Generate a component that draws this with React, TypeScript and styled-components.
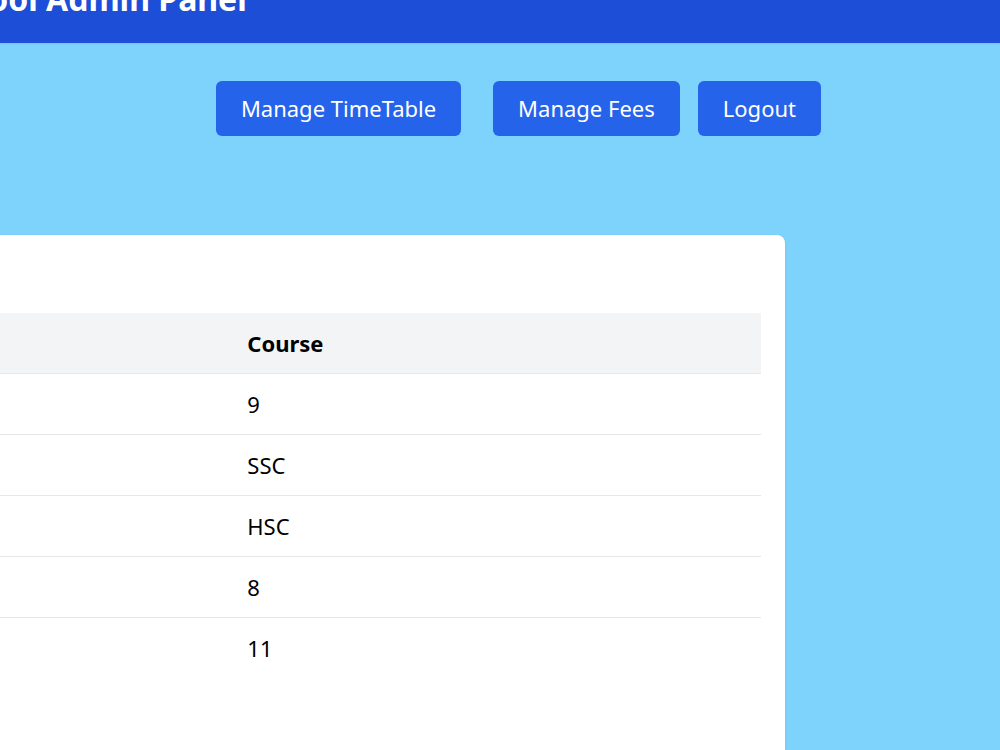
import { useLayoutEffect, useRef } from 'react'
import styled, { createGlobalStyle } from 'styled-components'

const GlobalStyle = createGlobalStyle`
  html, body {
    margin: 0;
    padding: 0;
    overflow: hidden;
  }
  body {
    font-family: 'Noto Sans', 'Open Sans', sans-serif;
    color: #111827;
  }
`

// the screenshot shows the page scrolled right and a bit down
const SCROLL_X = 900
const SCROLL_Y = 37

const Viewport = styled.div`
  width: 100vw;
  height: 100vh;
  overflow: hidden;
`

const Page = styled.div`
  width: 1900px;
  min-height: 1100px;
  background: #7dd3fc;
`

const Header = styled.header`
  display: flex;
  justify-content: center;
  background: #1d4ed8;
  padding: 16px 24px 24px;
  box-shadow: 0 1px 2px rgba(0, 0, 0, 0.08);
`

const Title = styled.h1`
  margin: 0 0 0 80px;
  font-size: 32px;
  line-height: 40px;
  font-weight: 700;
  color: #fff;
`

const Nav = styled.nav`
  display: flex;
  justify-content: flex-end;
  gap: 32px;
  margin-top: 38px;
  padding-right: 179px;
`

const NavGroup = styled.div`
  display: flex;
  gap: 18px;
`

const NavButton = styled.button`
  font-family: inherit;
  font-size: 22px;
  line-height: 31px;
  padding: 12px 25px;
  border: none;
  border-radius: 6px;
  background: #2563eb;
  color: #fff;
  cursor: pointer;
`

const Main = styled.main`
  padding: 99px 24px 0;
`

const Card = styled.section`
  width: 1661px;
  box-sizing: border-box;
  background: #fff;
  border-radius: 8px;
  padding: 24px 24px 120px;
  box-shadow: 0 1px 3px rgba(0, 0, 0, 0.1);
`

const CardTitle = styled.h2`
  margin: 0 0 24px;
  font-size: 24px;
  line-height: 30px;
  font-weight: 700;
`

const Table = styled.table`
  width: 100%;
  border-collapse: collapse;
  table-layout: fixed;
`

const Th = styled.th`
  text-align: left;
  font-size: 22px;
  line-height: 28px;
  font-weight: 700;
  padding: 16px 24px;
  color: #000;
  background: #f3f4f6;
  border-bottom: 1px solid #e5e7eb;
`

const Row = styled.tr`
  & + & td {
    border-top: 1px solid #e5e7eb;
  }
`

const Td = styled.td`
  font-size: 22px;
  line-height: 28px;
  padding: 16px 24px;
  color: #000;
`

const students = [
  { name: 'Aarav Sharma', email: 'aarav@school.com', course: '9' },
  { name: 'Priya Patel', email: 'priya@school.com', course: 'SSC' },
  { name: 'Rohan Desai', email: 'rohan@school.com', course: 'HSC' },
  { name: 'Sneha Kulkarni', email: 'sneha@school.com', course: '8' },
  { name: 'Vikram Joshi', email: 'vikram@school.com', course: '11' },
]

export default function App() {
  const viewRef = useRef<HTMLDivElement>(null)

  useLayoutEffect(() => {
    if (viewRef.current) {
      viewRef.current.scrollLeft = SCROLL_X
      viewRef.current.scrollTop = SCROLL_Y
    }
  }, [])

  return (
    <>
      <GlobalStyle />
      <Viewport ref={viewRef}>
        <Page>
          <Header>
            <Title>School Admin Panel</Title>
          </Header>
          <Nav>
            <NavButton>Manage TimeTable</NavButton>
            <NavGroup>
              <NavButton>Manage Fees</NavButton>
              <NavButton>Logout</NavButton>
            </NavGroup>
          </Nav>
          <Main>
            <Card>
              <CardTitle>Students</CardTitle>
              <Table>
                <thead>
                  <tr>
                    <Th>Name</Th>
                    <Th>Email</Th>
                    <Th>Course</Th>
                  </tr>
                </thead>
                <tbody>
                  {students.map((s) => (
                    <Row key={s.email}>
                      <Td>{s.name}</Td>
                      <Td>{s.email}</Td>
                      <Td>{s.course}</Td>
                    </Row>
                  ))}
                </tbody>
              </Table>
            </Card>
          </Main>
        </Page>
      </Viewport>
    </>
  )
}
